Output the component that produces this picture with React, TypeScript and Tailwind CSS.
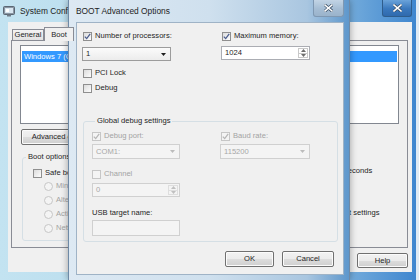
import React from "react";

function Check({ checked = false, disabled = false }: { checked?: boolean; disabled?: boolean }) {
  return (
    <span
      className={`flex h-[9px] w-[9px] shrink-0 items-center justify-center border ${
        disabled ? "border-[#c6c6c6] bg-[#f4f4f4]" : "border-[#8f8f8f] bg-[linear-gradient(135deg,#dcdcdc,#fdfdfd)]"
      }`}
    >
      {checked && (
        <svg width="7" height="7" viewBox="0 0 7 7">
          <path d="M0.8 3.6 L2.7 5.6 L6.2 0.9" fill="none" stroke={disabled ? "#b6b6b6" : "#4c5e8e"} strokeWidth="1.3" />
        </svg>
      )}
    </span>
  );
}

function CheckRow({ label, checked, disabled }: { label: string; checked?: boolean; disabled?: boolean }) {
  return (
    <div className={`flex h-[10px] items-center gap-[3px] leading-[10px] ${disabled ? "text-[#a3a3a3]" : ""}`}>
      <Check checked={checked} disabled={disabled} />
      <span className="whitespace-nowrap">{label}</span>
    </div>
  );
}

function Radio({ label }: { label: string }) {
  return (
    <div className="flex h-[10px] items-center gap-[3px] leading-[10px] text-[#a3a3a3]">
      <span className="h-[9px] w-[9px] shrink-0 rounded-full border border-[#c6c6c6] bg-[#f4f4f4]" />
      <span className="whitespace-nowrap">{label}</span>
    </div>
  );
}

function Combo({ value, disabled, className }: { value: string; disabled?: boolean; className: string }) {
  return (
    <div
      className={`flex items-center justify-between border pl-[3px] pr-[4px] ${
        disabled
          ? "border-[#d0d0d0] bg-[#f4f4f4] text-[#a7a7a7]"
          : "border-[#9c9c9c] bg-[linear-gradient(#fbfbfb,#ececec)] text-[#1e1e1e]"
      } ${className}`}
    >
      <span className="leading-[10px]">{value}</span>
      <svg width="5" height="3" viewBox="0 0 5 3">
        <path d="M0 0H5L2.5 3Z" fill={disabled ? "#bcbcbc" : "#1e1e1e"} />
      </svg>
    </div>
  );
}

function Spin({ value, disabled, className }: { value: string; disabled?: boolean; className: string }) {
  const c = disabled ? "#c0c0c0" : "#6d6d6d";
  return (
    <div
      className={`flex items-stretch border ${
        disabled ? "border-[#d0d0d0] bg-[#f4f4f4] text-[#a7a7a7]" : "border-[#abadb3] bg-white text-[#1e1e1e]"
      } ${className}`}
    >
      <span className="flex flex-1 items-center pl-[3px] leading-[10px]">{value}</span>
      <div className={`my-px mr-px flex w-[10px] flex-col border ${disabled ? "border-[#dedede]" : "border-[#c9c9c9]"}`}>
        <div className="flex flex-1 items-center justify-center">
          <svg width="5" height="3" viewBox="0 0 5 3">
            <path d="M0 3H5L2.5 0Z" fill={c} />
          </svg>
        </div>
        <div className={`flex flex-1 items-center justify-center border-t ${disabled ? "border-[#dedede]" : "border-[#c9c9c9]"}`}>
          <svg width="5" height="3" viewBox="0 0 5 3">
            <path d="M0 0H5L2.5 3Z" fill={c} />
          </svg>
        </div>
      </div>
    </div>
  );
}

function Btn({ children, className }: { children: React.ReactNode; className: string }) {
  return (
    <div
      className={`flex items-center justify-center rounded-[2px] border border-[#707070] bg-[linear-gradient(#f2f2f2_0%,#ebebeb_50%,#dddddd_51%,#cfcfcf_100%)] leading-[10px] text-[#1e1e1e] shadow-[inset_0_0_0_1px_#fbfbfb] ${className}`}
    >
      {children}
    </div>
  );
}

function CloseX() {
  return (
    <svg width="9" height="8" viewBox="0 0 9 8">
      <path d="M1 1L8 7M8 1L1 7" stroke="#3a4f66" strokeWidth="3" strokeLinecap="square" />
      <path d="M1 1L8 7M8 1L1 7" stroke="#ffffff" strokeWidth="1.6" strokeLinecap="square" />
    </svg>
  );
}

function Group({ label, className, children }: { label: string; className: string; children: React.ReactNode }) {
  return (
    <div className={`flex flex-col rounded-[3px] border border-[#d5dfe5] ${className}`}>
      <div className="-mt-[6px] ml-[3px] w-fit whitespace-nowrap bg-[#f0f0f0] px-[2px] leading-[10px]">{label}</div>
      {children}
    </div>
  );
}

export default function App() {
  return (
    <div className="relative h-[280px] w-[419px] overflow-hidden bg-[#dfeaf4] font-['Liberation_Sans',Arial,sans-serif] text-[7.6px] text-[#1e1e1e]">
      {/* Background window: System Configuration */}
      <div className="absolute left-0 top-0 flex h-[280px] w-[416px] flex-col bg-[linear-gradient(90deg,#c3e3f1_0%,#b3d9eb_45%,#86b9e0_78%,#3f86cf_100%)]">
        <div className="flex h-[22px] items-center">
          <svg className="ml-[3px]" width="12" height="12" viewBox="0 0 12 12">
            <rect x="0.5" y="1.5" width="11" height="8" rx="1" fill="#8a96a3" stroke="#5b6673" />
            <rect x="2" y="3" width="8" height="5" fill="#d9e6f0" />
            <rect x="3" y="4" width="3" height="3" fill="#ffffff" />
            <rect x="4" y="9.5" width="4" height="2" fill="#6f7a86" />
          </svg>
          <span className="ml-[5px] whitespace-nowrap text-[8.4px] leading-[10px]">System Configuration</span>
          <div className="flex-1" />
          <div className="mr-[4px] flex h-[17px] w-[30px] items-center justify-center self-start rounded-b-[3px] border border-t-0 border-[#2f5d8c] bg-[linear-gradient(#6aa3da,#3a78bd_55%,#2f6aae)]">
            <CloseX />
          </div>
        </div>
        <div className="flex flex-1">
          <div className="w-[8px]" />
          <div className="flex w-[404px] flex-col bg-[#f0f0f0]">
            <div className="ml-[4px] mt-[5px] flex h-[13px] items-end">
              <div className="flex h-[11px] w-[32px] items-center justify-center border border-b-0 border-[#898c95] bg-[linear-gradient(#f3f3f3,#e2e2e2)] leading-[10px]">
                General
              </div>
              <div className="relative z-10 -mb-px flex h-[14px] w-[30px] items-center justify-center border border-b-0 border-[#898c95] bg-[#f0f0f0] leading-[10px]">
                Boot
              </div>
            </div>
            <div className="ml-[3px] mr-[4px] flex h-[208px] flex-col border border-[#898c95] bg-[#f0f0f0]">
              <div className="ml-[8px] mt-[4px] h-[79px] w-[379px] border border-[#828790] bg-white">
                <div className="mx-px mt-[5px] flex h-[11px] items-center whitespace-nowrap bg-[#3399ff] pl-[2px] leading-[10px] text-white">
                  Windows 7 (C:\Windows) : Current OS; Default OS
                </div>
              </div>
              <Btn className="ml-[9px] mt-[5px] h-[16px] w-[88px]">Advanced options...</Btn>
              <div className="ml-[10px] mt-[12px] flex">
                <Group label="Boot options" className="h-[84px] w-[209px]">
                  <div className="ml-[10px] mt-[6px]">
                    <CheckRow label="Safe boot" />
                  </div>
                  <div className="ml-[21px] mt-[3px] flex flex-col gap-[4px]">
                    <Radio label="Minimal" />
                    <Radio label="Alternate shell" />
                    <Radio label="Active Directory repair" />
                    <Radio label="Network" />
                  </div>
                </Group>
                <div className="-mt-[6px] ml-[63px] flex flex-col">
                  <div className="leading-[10px]">Timeout:</div>
                  <div className="mt-[3px] flex items-center gap-[4px]">
                    <div className="flex h-[13px] w-[46px] items-center border border-[#abadb3] bg-white pl-[3px] leading-[10px]">30</div>
                    <span className="leading-[10px]">seconds</span>
                  </div>
                  <div className="mt-[31px] flex items-start gap-[3px]">
                    <Check />
                    <span className="leading-[10px]">
                      Make all boot settings
                      <br />
                      permanent
                    </span>
                  </div>
                </div>
              </div>
            </div>
            <div className="mr-[4px] mt-[5px] flex justify-end">
              <Btn className="h-[15px] w-[51px]">Help</Btn>
            </div>
          </div>
        </div>
        <div className="h-[8px]" />
      </div>

      {/* Front dialog: BOOT Advanced Options */}
      <div className="absolute left-[68px] top-0 flex h-[280px] w-[282px] flex-col border-x border-[#6f8aa6] bg-[linear-gradient(90deg,#dde9f3_0%,#cfe0ee_50%,#a9c6e0_85%,#5e97cc_100%)] shadow-[0_0_7px_rgba(0,0,0,0.35)]">
        <div className="flex h-[22px] items-center">
          <span className="ml-[7px] whitespace-nowrap text-[8.4px] leading-[10px]">BOOT Advanced Options</span>
          <div className="flex-1" />
          <div className="mr-[5px] flex h-[17px] w-[31px] items-center justify-center self-start rounded-b-[3px] border border-t-0 border-[#7f98b2] bg-[linear-gradient(#c2d4e5,#a5bdd4_55%,#9ab3cb)]">
            <CloseX />
          </div>
        </div>
        <div className="flex flex-1">
          <div className="w-[7px]" />
          <div className="flex w-[268px] flex-col border border-[#9fb3c6] bg-[#f0f0f0] pl-[5px] pt-[8px]">
            <div className="flex">
              <div className="flex w-[139px] flex-col">
                <div className="ml-px">
                  <CheckRow label="Number of processors:" checked />
                </div>
                <Combo value="1" className="mt-[6px] h-[14px] w-[89px]" />
              </div>
              <div className="flex flex-col">
                <div className="ml-px">
                  <CheckRow label="Maximum memory:" checked />
                </div>
                <Spin value="1024" className="mt-[5px] h-[14px] w-[89px]" />
              </div>
            </div>
            <div className="ml-px mt-[7px]">
              <CheckRow label="PCI Lock" />
            </div>
            <div className="ml-px mt-[5px]">
              <CheckRow label="Debug" />
            </div>
            <Group label="Global debug settings" className="ml-px mt-[28px] w-[255px] pb-[5px] pl-[8px]">
              <div className="mt-[5px] flex">
                <div className="flex w-[129px] flex-col">
                  <CheckRow label="Debug port:" checked disabled />
                  <Combo value="COM1:" disabled className="mt-[3px] h-[15px] w-[88px]" />
                </div>
                <div className="flex flex-col">
                  <CheckRow label="Baud rate:" checked disabled />
                  <Combo value="115200" disabled className="-ml-px mt-[3px] h-[15px] w-[90px]" />
                </div>
              </div>
              <div className="mt-[10px]">
                <CheckRow label="Channel" disabled />
              </div>
              <Spin value="0" disabled className="mt-[4px] h-[14px] w-[88px]" />
              <div className="mt-[11px] leading-[10px]">USB target name:</div>
              <div className="mt-[2px] h-[16px] w-[88px] border border-[#d0d0d0] bg-[#f4f4f4]" />
            </Group>
            <div className="mr-[9px] mt-[9px] flex justify-end gap-[8px]">
              <Btn className="h-[16px] w-[49px]">OK</Btn>
              <Btn className="h-[16px] w-[52px]">Cancel</Btn>
            </div>
          </div>
          <div className="w-[5px]" />
        </div>
        <div className="h-[5px]" />
      </div>
    </div>
  );
}
